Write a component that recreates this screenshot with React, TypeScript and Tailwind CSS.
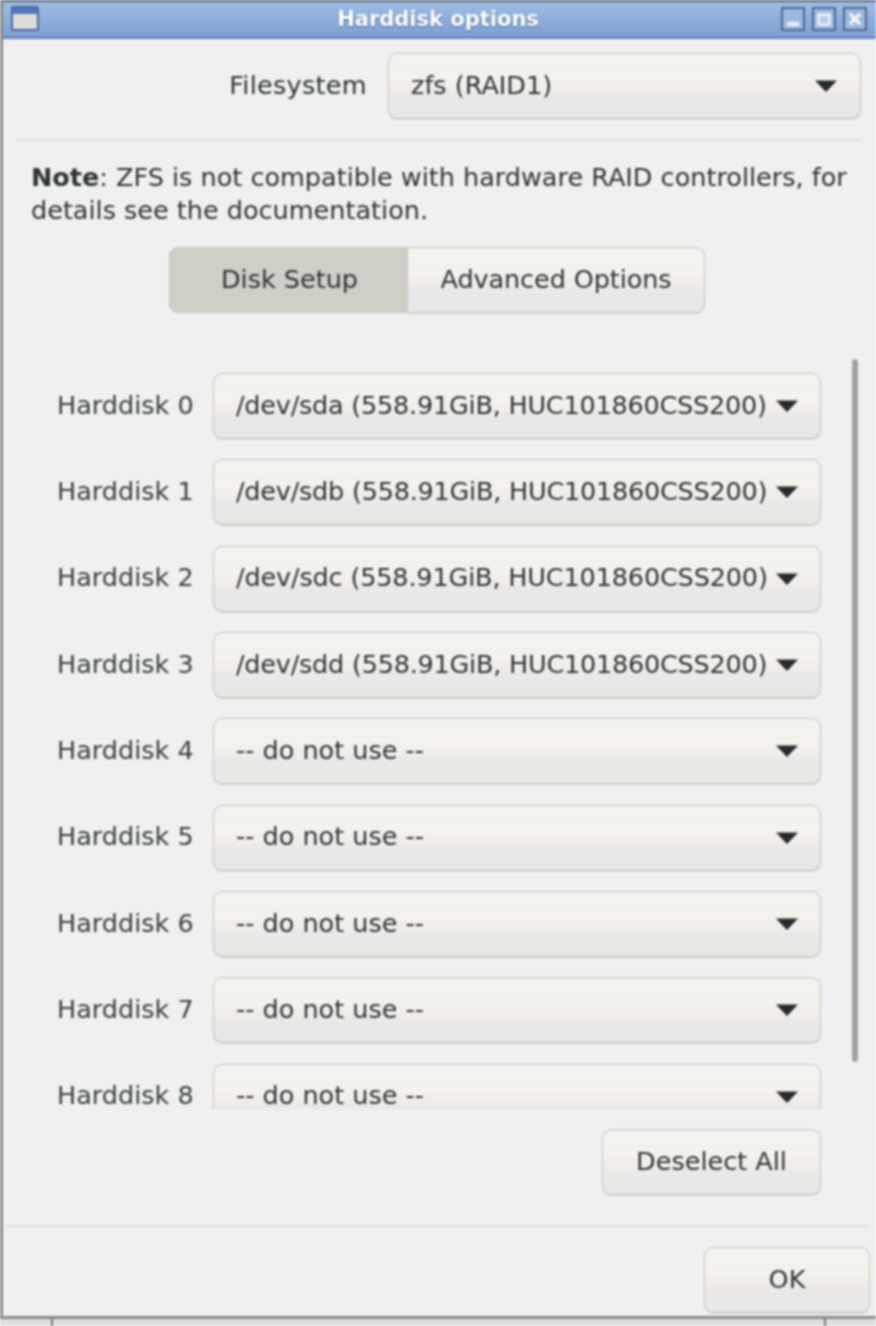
import React from "react";

const selectBg = "bg-[linear-gradient(to_bottom,#f2f2f0_0%,#f3f2ec_40%,#f2eeeb_50%,#f0ecea_58%,#e9e9e8_66%,#e7e7e6_100%)]";
const box = `border border-[#c9c2bc] rounded-[9px] shadow-[0_1px_0_#d6d4ce] pb-[3px] ${selectBg}`;

function Arrow() {
  return (
    <svg width="24" height="14" viewBox="0 0 24 14" className="shrink-0 mt-[3px]">
      <path d="M1 1.5 H23 L12 13 Z" fill="#262b2d" />
    </svg>
  );
}

function Row({ n, value, track }: { n: number; value: string; track: string }) {
  return (
    <div className="flex items-center h-[66px] shrink-0">
      <div className="w-[137px] pb-[3px] text-[#3a4042]">Harddisk {n}</div>
      <div className={`ml-[19px] w-[608px] h-[66px] flex items-center justify-between pl-[22px] pr-[21px] whitespace-nowrap ${box}`}>
        <span className={track}>{value}</span>
        <Arrow />
      </div>
    </div>
  );
}

export default function App() {
  const rows = [
    { v: "/dev/sda (558.91GiB, HUC101860CSS200)", t: "tracking-[-0.22px]" },
    { v: "/dev/sdb (558.91GiB, HUC101860CSS200)", t: "tracking-[-0.22px]" },
    { v: "/dev/sdc (558.91GiB, HUC101860CSS200)", t: "tracking-[-0.15px]" },
    { v: "/dev/sdd (558.91GiB, HUC101860CSS200)", t: "tracking-[-0.22px]" },
    { v: "-- do not use --", t: "" },
    { v: "-- do not use --", t: "" },
    { v: "-- do not use --", t: "" },
    { v: "-- do not use --", t: "" },
    { v: "-- do not use --", t: "" },
  ];
  return (
    <div className="w-[876px] h-[1326px] overflow-hidden flex flex-col bg-[#f0f0f0] text-[#2e3436] text-[25.5px] leading-[30px] font-['DejaVu_Sans',sans-serif] blur-[0.8px]">
      <div className="flex-1 min-h-0 flex flex-col border-l-[3px] border-[#8a8a88]">
        {/* title bar */}
        <div className="h-[39px] shrink-0 flex items-center pl-[8px] pr-[9px] pb-[4px] bg-[linear-gradient(to_bottom,#9fbce3,#7fa1d3_90%,#5d7fb5)] border-t-[2px] border-[#5a6478]">
          <svg width="28" height="25" viewBox="0 0 28 25" className="shrink-0">
            <rect x="1" y="1" width="26" height="23" rx="1" fill="#dcdcdc" stroke="#4f6a9c" strokeWidth="2" />
            <rect x="2" y="2" width="24" height="6" fill="#4f76bd" />
          </svg>
          <div className="flex-1 text-center pl-[56px] text-white font-bold text-[21px] [text-shadow:0_1px_2px_#4a628c]">Harddisk options</div>
          <div className="flex gap-[7px] items-center">
            <svg width="24" height="24" viewBox="0 0 24 24"><rect x="1" y="1" width="22" height="22" fill="#9db8e0" stroke="#50688f" strokeWidth="2" /><rect x="6" y="15" width="12" height="4" fill="#eef2f8" /></svg>
            <svg width="24" height="24" viewBox="0 0 24 24"><rect x="1" y="1" width="22" height="22" fill="#9db8e0" stroke="#50688f" strokeWidth="2" /><rect x="6.5" y="7.5" width="11" height="10" fill="#b9cdea" stroke="#eef2f8" strokeWidth="2.5" /></svg>
            <svg width="24" height="24" viewBox="0 0 24 24"><rect x="1" y="1" width="22" height="22" fill="#9db8e0" stroke="#50688f" strokeWidth="2" /><path d="M7 7 L17 17 M17 7 L7 17" stroke="#f2f5fa" strokeWidth="3.5" /></svg>
          </div>
        </div>

        {/* body */}
        <div className="flex-1 min-h-0 flex flex-col">
          <div className="flex items-center justify-end h-[66px] mt-[14px] pr-[15px] shrink-0">
            <span className="mr-[21px] pb-[3px] tracking-[0.3px]">Filesystem</span>
            <div className={`w-[473px] h-[66px] flex items-center justify-between pl-[22px] pr-[22px] ${box}`}>
              <span>zfs (RAID1)</span>
              <Arrow />
            </div>
          </div>
          <div className="h-[2px] bg-[#e2e1df] mt-[20px] ml-[13px] mr-[14px] shrink-0" />

          <div className="mt-[20px] ml-[28px] mr-[10px] leading-[33px] shrink-0 whitespace-nowrap">
            <div><b>Note</b>: ZFS is not compatible with hardware RAID controllers, for</div>
            <div>details see the documentation.</div>
          </div>

          <div className="flex justify-center mt-[20px] shrink-0 pr-[5px]">
            <div className="w-[239px] h-[66px] flex items-center justify-center pb-[3px] pl-[2px] rounded-l-[9px] bg-[#cfcfc8] border border-[#c6c5be]">Disk Setup</div>
            <div className={`w-[297px] h-[66px] flex items-center justify-center rounded-l-none border-l-0 tracking-[-0.1px] ${box}`}>Advanced Options</div>
          </div>

          {/* scroll area */}
          <div className="relative mt-[46px] h-[750px] shrink-0 overflow-hidden">
            <div className="flex flex-col gap-[20.35px] pt-[14px] pl-[54px]">
              {rows.map((r, i) => (
                <Row key={i} n={i} value={r.v} track={r.t} />
              ))}
            </div>
            <div className="absolute left-[849px] top-0 w-[6px] h-[703px] rounded-full bg-[#a0a2a1]" />
          </div>

          <div className="flex justify-end pr-[55px] mt-[20px] shrink-0">
            <div className={`w-[219px] h-[66px] flex items-center justify-center ${box}`}>Deselect All</div>
          </div>

          <div className="h-[2px] bg-[#e2e1df] mt-[30px] ml-[3px] mr-[6px] shrink-0" />

          <div className="flex justify-end pr-[6px] mt-[20px] shrink-0">
            <div className={`w-[166px] h-[66px] flex items-center justify-center ${box}`}>OK</div>
          </div>
        </div>
      </div>

      {/* bottom strip */}
      <div className="h-[10px] shrink-0 flex border-t-[3px] border-[#8a8a88] bg-[#dfdfdf]">
        <div className="w-[53px] h-full border-r-[2px] border-[#777]" />
        <div className="flex-1 h-full" />
        <div className="w-[2px] h-full bg-[#777] mr-[50px]" />
      </div>
    </div>
  );
}
